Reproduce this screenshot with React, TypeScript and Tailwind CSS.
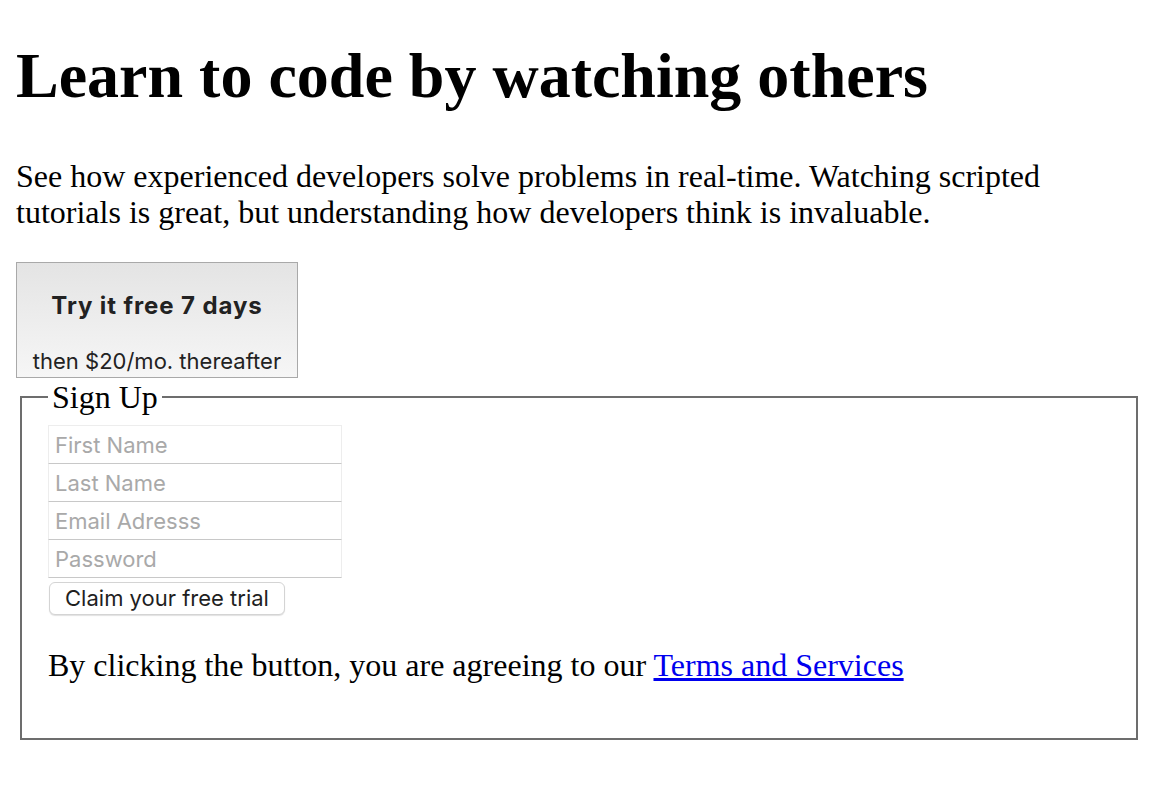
import React from "react";

export default function App() {
  return (
    <div className="min-h-[786px] bg-white px-4 text-black font-['Liberation_Serif',serif]">
      <h1 className="mt-[39px] text-[64px] font-bold leading-[74px] font-['Liberation_Serif',serif] whitespace-nowrap">
        Learn to code by watching others
      </h1>
      <p className="mt-[45px] text-[32px] leading-[36px] font-['Liberation_Serif',serif] whitespace-nowrap">
        See how experienced developers solve problems in real-time. Watching scripted
        <br />
        tutorials is great, but understanding how developers think is invaluable.
      </p>
      <button
        type="button"
        className="mt-[32px] flex w-[282px] h-[116px] flex-col items-center border border-[#a9a9a9] bg-gradient-to-b from-[#e4e4e4] to-[#f6f6f6] pt-[29px] pb-[3px] font-['Inter',sans-serif] text-[#222]"
      >
        <span className="text-[24px] font-bold leading-[28px] tracking-[0.9px] whitespace-nowrap">Try it free 7 days</span>
        <span className="mt-[28px] text-[22px] leading-[26px] whitespace-nowrap">then $20/mo. thereafter</span>
      </button>
      <fieldset className="mt-[1px] ml-1 border-2 border-[#6d6d6d] pl-[26px] pr-4 pt-[10px] pb-[55px]">
        <legend className="px-1 text-[32px] leading-[36px] font-['Liberation_Serif',serif]">Sign Up</legend>
        <div className="flex w-[294px] flex-col">
          {["First Name", "Last Name", "Email Adresss", "Password"].map((p, i) => (
            <input
              key={p}
              placeholder={p}
              type={p === "Password" ? "password" : "text"}
              className={
                "w-full border-x border-b border-x-[#ededed] border-b-[#c8c8c8] bg-white pl-[6px] font-['Inter',sans-serif] text-[22px] text-[#222] placeholder:text-[#a9a9a9] outline-none " +
                (i === 0 ? "h-[39px] border-t border-t-[#ededed]" : "h-[38px]")
              }
            />
          ))}
        </div>
        <button
          type="button"
          className="mt-[4px] ml-px flex h-[33px] w-[236px] items-center justify-center rounded-[6px] border border-[#d4d4d4] bg-white font-['Inter',sans-serif] text-[22px] text-[#1f1f1f] shadow-[0_1px_1px_rgba(0,0,0,0.12)] whitespace-nowrap"
        >
          Claim your free trial
        </button>
        <p className="mt-[32px] text-[32px] leading-[36px] font-['Liberation_Serif',serif] whitespace-nowrap">
          By clicking the button, you are agreeing to our{" "}
          <a href="#" className="text-[#0000ee] underline">
            Terms and Services
          </a>
        </p>
      </fieldset>
    </div>
  );
}
